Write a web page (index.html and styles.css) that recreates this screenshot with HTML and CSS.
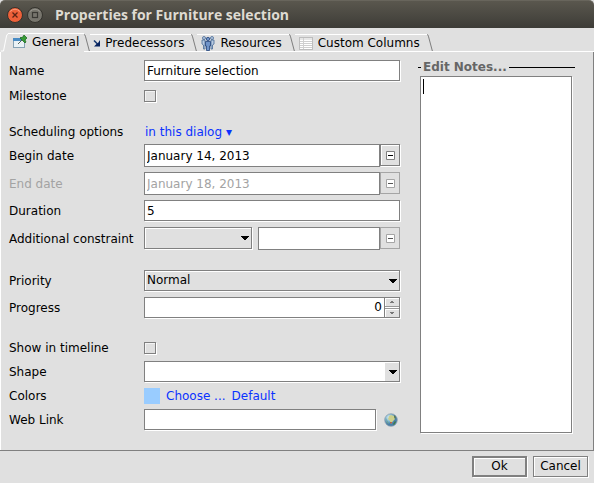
FILE: index.html
```
<!DOCTYPE html>
<html lang="en">
<head>
<meta charset="utf-8">
<title>Properties for Furniture selection</title>
<link rel="stylesheet" href="styles.css">
</head>
<body>
<main class="dialog">
  <header class="titlebar">
    <button class="winbtn close" type="button" aria-label="Close"><svg width="16" height="16" viewBox="0 0 16 16"><circle cx="8" cy="8" r="7.5" fill="#ee6039" stroke="#33322d"/><path d="M3 4.500Q8 0 13 4.500" fill="none" stroke="#f89a79"/><path d="M5.500 5.500l5 5M10.500 5.500l-5 5" stroke="#5c2415" stroke-width="1.300"/></svg></button>
    <button class="winbtn" type="button" aria-label="Maximize"><svg width="16" height="16" viewBox="0 0 16 16"><circle cx="8" cy="8" r="7.500" fill="#77756d" stroke="#33322d"/><path d="M3 4.500Q8 0 13 4.500" fill="none" stroke="#96948c"/><rect x="5.500" y="5.500" width="5" height="5" fill="none" stroke="#3a3934" stroke-width="1.200"/></svg></button>
    <h1 class="title">Properties for Furniture selection</h1>
  </header>

  <nav class="tabs" role="tablist">
    <svg class="edge lead" width="7" height="18" viewBox="0 0 7 18"><path d="M0 17.500H2.500L5.500 2.500Q6 .5 7 .5" fill="none" stroke="#fff"/></svg>
    <button class="tab selected" type="button" role="tab" aria-selected="true">
      <svg width="16" height="16" viewBox="0 0 16 16"><rect x="1.500" y="4.500" width="11" height="9" fill="#edf4f8" stroke="#86a2b4"/><path d="M1 4h9v3H1z" fill="#4a8cc4"/><path d="M2 7h10v6H2z" fill="#e9f1f5"/><path d="M6 10l4-4" stroke="#55645a"/><path d="M8 4l5 5 1-1-1-2 2-2-3-3-2 3-1-1z" fill="#389c35" stroke="#17621b" stroke-width=".7"/></svg>
      <span>General</span>
    </button>
    <svg class="edge" width="6" height="18" viewBox="0 0 6 18"><path d="M0 .5Q1 .5 1.500 3L5.500 18" fill="none" stroke="#777"/></svg>
    <button class="tab" type="button" role="tab">
      <svg width="8" height="16" viewBox="0 0 8 16"><path d="M1 5.500l5 5" stroke="#17376f" stroke-width="1.600"/><path d="M7 5v6.500H1L3.500 9 5 8z" fill="#06225f"/></svg>
      <span>Predecessors</span>
    </button>
    <svg class="edge" width="6" height="18" viewBox="0 0 6 18"><path d="M0 .5Q1 .5 1.500 3L5.500 18" fill="none" stroke="#777"/></svg>
    <button class="tab" type="button" role="tab">
      <svg width="16" height="16" viewBox="0 0 16 16" fill="#b9cbe2" stroke="#486996" stroke-width=".8"><circle cx="4" cy="3" r="1.500"/><path d="M2 5h3v9H3.500V10L2 9z"/><circle cx="12" cy="3" r="1.500"/><path d="M14 5h-3v9h1.500v-4L14 9z"/><g fill="#6f93c8" stroke="#23447b"><circle cx="8" cy="4" r="1.700"/><path d="M5.500 6.500h5V11H9.500v4.500h-3V11h-1z"/></g></svg>
      <span>Resources</span>
    </button>
    <svg class="edge" width="6" height="18" viewBox="0 0 6 18"><path d="M0 .5Q1 .5 1.500 3L5.500 18" fill="none" stroke="#777"/></svg>
    <button class="tab" type="button" role="tab">
      <svg width="16" height="16" viewBox="0 0 16 16"><rect x="1.500" y="2.500" width="13" height="12" fill="#fff" stroke="#bdbdbd"/><path d="M2 4h12M2 6.500h12M2 8.500h12M2 10.500h12M2 12.500h12M5.500 3v11" stroke="#cfcfcf"/></svg>
      <span>Custom Columns</span>
    </button>
    <svg class="edge" width="6" height="18" viewBox="0 0 6 18"><path d="M0 .5Q1 .5 1.500 3L5.500 18" fill="none" stroke="#777"/></svg>
    <span class="baseline"></span>
  </nav>

  <form class="panel">
    <div class="form">
      <div class="group">
        <div class="row"><label for="name">Name</label><input class="field" id="name" type="text" value="Furniture selection"></div>
        <div class="row short"><label for="milestone">Milestone</label><input class="check" id="milestone" type="checkbox"></div>
      </div>
      <div class="group">
        <div class="row line"><span class="label">Scheduling options</span><a class="link inset" href="#">in this dialog ▾</a></div>
        <div class="row tall"><label for="begin">Begin date</label><div class="date"><input class="field" id="begin" type="text" value="January 14, 2013"><button class="pick" type="button" aria-label="Pick begin date"><svg width="9" height="9"><path d="M.5.5h8v8h-8z" fill="#fff" stroke="#808080"/><path d="M2 4.500h5" stroke="#000"/></svg></button></div></div>
        <div class="row tall"><label class="off" for="end">End date</label><div class="date"><input class="field" id="end" type="text" value="January 18, 2013" disabled><button class="pick" type="button" disabled aria-label="Pick end date"><svg width="9" height="9"><path d="M.5.5h8v8h-8z" fill="#fff" stroke="#a5a5a5"/><path d="M2 4.500h5" stroke="#555"/></svg></button></div></div>
        <div class="row"><label for="duration">Duration</label><input class="field" id="duration" type="text" value="5"></div>
        <div class="row tall"><label for="constraint">Additional constraint</label>
          <div class="pair">
            <div class="combo"><select id="constraint"><option></option></select><svg class="arrow" width="8" height="4"><path d="M0 0h8v1H7v1H6v1H5v1H3V3H2V2H1V1H0z"/></svg></div>
            <div class="date"><input class="field" type="text" aria-label="Constraint date"><button class="pick" type="button" disabled aria-label="Pick constraint date"><svg width="9" height="9"><path d="M.5.5h8v8h-8z" fill="#fff" stroke="#a5a5a5"/><path d="M2 4.500h5" stroke="#555"/></svg></button></div>
          </div>
        </div>
      </div>
      <div class="group">
        <div class="row"><label for="priority">Priority</label><div class="combo"><select id="priority"><option>Normal</option></select><svg class="arrow" width="8" height="4"><path d="M0 0h8v1H7v1H6v1H5v1H3V3H2V2H1V1H0z"/></svg></div></div>
        <div class="row"><label for="progress">Progress</label>
          <div class="spinner"><input id="progress" type="text" value="0"><div class="steps"><button type="button" aria-label="Increase"><svg width="4" height="2"><path d="M1 0h2v1h1v1H0V1h1z" fill="#777"/></svg></button><button type="button" aria-label="Decrease"><svg width="4" height="2"><path d="M0 0h4v1H3v1H1V1H0z" fill="#777"/></svg></button></div></div>
        </div>
      </div>
      <div class="group">
        <div class="row short"><label for="timeline">Show in timeline</label><input class="check" id="timeline" type="checkbox"></div>
        <div class="row"><label for="shape">Shape</label><div class="combo light"><select id="shape"><option></option></select><svg class="arrow" width="8" height="4"><path d="M0 0h8v1H7v1H6v1H5v1H3V3H2V2H1V1H0z"/></svg></div></div>
        <div class="row line"><span class="label">Colors</span><div class="colors"><span class="swatch"></span><a class="link" href="#">Choose ...</a><a class="link" href="#">Default</a></div></div>
        <div class="row"><label for="web">Web Link</label>
          <div class="web"><input class="field" id="web" type="text"><button class="globe" type="button" aria-label="Open link"><svg width="14" height="14" viewBox="0 0 14 14"><defs><radialGradient id="sea" cx=".35" cy=".3"><stop offset="0" stop-color="#e4f1f6"/><stop offset=".55" stop-color="#86bcd6"/><stop offset="1" stop-color="#4a7fa8"/></radialGradient></defs><circle cx="7" cy="7" r="6.300" fill="url(#sea)" stroke="#8a9eac" stroke-width=".7"/><path d="M5 3l2-1 3 1 1 3-2 2-2 3-1-3-2-2z" fill="#cdd08c"/><path d="M10 2l2 2-1 2-1-2z" fill="#5b7a52"/><path d="M11 8l1 1-2 3-1-1z" fill="#3f7a48"/><path d="M2 5l1 2 2 4-2-1z" fill="#6aa394"/><path d="M6 9h2l-1 2z" fill="#c7442d"/></svg></button></div>
        </div>
      </div>
    </div>
    <div class="notes">
      <label class="legend" for="notes"><span>Edit Notes...</span></label>
      <div class="notebox"><textarea id="notes"></textarea><span class="caret"></span></div>
    </div>
  </form>

  <footer class="actions">
    <button class="btn default" type="button">Ok</button>
    <button class="btn" type="button">Cancel</button>
  </footer>
</main>
</body>
</html>
```
FILE: styles.css
```
* { box-sizing: border-box; }
body {
  margin: 0;
  background: #e0e0e0;
  color: #000;
  font: 12px/15px "DejaVu Sans", sans-serif;
}
input, select, textarea, button {
  margin: 0;
  border-radius: 0;
  color: inherit;
  font: inherit;
  outline: 0;
}
svg { display: block; flex: none; }
.dialog { display: flex; flex-direction: column; min-height: 100vh; }

.titlebar {
  display: flex;
  align-items: center;
  gap: 4px;
  height: 28px;
  padding: 0 7px;
  border-top: 1px solid #68655c;
  border-radius: 5px 5px 0 0;
  background: linear-gradient(#5a574e, #3d3c37);
}
.winbtn { padding: 0; border: 0; background: none; }
.title {
  margin: 0 0 0 8px;
  color: #dfdbd2;
  font: bold 14px/20px "Open Sans", sans-serif;
}

.tabs {
  display: flex;
  align-items: flex-end;
  height: 24px;
  padding-left: 1px;
  white-space: nowrap;
}
.tab {
  display: flex;
  align-items: center;
  gap: 4px;
  height: 18px;
  padding: 0 7px 0 3px;
  border: 0;
  border-top: 1px solid #fff;
  border-bottom: 1px solid #fff;
  background: none;
}
.tab.selected { height: 19px; padding: 0 5px 2px 4px; border-bottom: 0; }
.edge { border-bottom: 1px solid #fff; }
.edge.lead { height: 19px; border: 0; }
.baseline { flex: 1; height: 1px; background: #fff; }

.panel {
  display: flex;
  gap: 20px;
  padding: 8px 20px 19px 8px;
  border: solid #808080;
  border-width: 0 1px 1px 0;
  box-shadow: inset 1px 0 #fff;
}
.form { display: flex; flex: 1; flex-direction: column; gap: 20px; min-width: 0; padding-left: 1px; }
.group { display: flex; flex-direction: column; gap: 5px; }
.row {
  display: grid;
  grid-template-columns: 135px minmax(0, 1fr);
  align-items: center;
  height: 22px;
}
.row.short { height: 17px; }
.row.tall { height: 23px; }
.row.line { height: 15px; }
.row:has(.colors) { height: 16px; }
.row > label, .label { padding-top: 1px; }
.off { color: #a3a3a3; }
.link { color: #0a32ff; text-decoration: none; }
.inset { padding: 1px 0 0 1px; }

.field {
  width: 100%;
  min-width: 0;
  height: 21px;
  padding: 0 2px;
  border: 1px solid #808080;
  background: #fff;
  box-shadow: 1px 1px #fff;
}
.row > .field, .combo, .spinner, .web, .date, .pair { align-self: start; }
.field:disabled { color: #a3a3a3; }
.check {
  appearance: none;
  width: 12px;
  height: 12px;
  border: 1px solid #808080;
  background: #e0e0e0;
  box-shadow: 1px 1px #fff, inset 1px 1px #f4f4f4;
}
.date { display: flex; flex: 1; min-width: 0; }
.date .field { height: 23px; box-shadow: none; }
.pick {
  display: grid;
  place-items: center;
  flex: none;
  width: 20px;
  height: 22px;
  padding: 0;
  border: 1px solid #808080;
  background: #e0e0e0;
  box-shadow: inset 1px 1px #fff, 1px 1px #fff;
}
.pick:disabled { border-color: #a5a5a5; box-shadow: none; }

.pair { display: flex; gap: 6px; }
.pair .combo { flex: 0 0 108px; }
.combo { display: grid; align-items: center; }
.combo > * { grid-area: 1 / 1; }
.combo select {
  appearance: none;
  width: 100%;
  height: 21px;
  padding: 0 2px;
  border: 1px solid #808080;
  background: #e0e0e0;
  box-shadow: 1px 1px #fff, inset 1px 1px #fff;
}
.pair .combo select { height: 22px; }
.combo.light select { background: linear-gradient(to left, #e0e0e0 14px, #fff 14px); }
.arrow { justify-self: end; margin-right: 3px; pointer-events: none; }

.spinner {
  display: flex;
  height: 21px;
  border: 1px solid #808080;
  background: #fff;
  box-shadow: 1px 1px #fff;
}
.spinner input { flex: 1; min-width: 0; padding: 0 2px; border: 0; background: none; text-align: right; }
.steps { display: flex; flex-direction: column; gap: 1px; width: 15px; background: #fff; border-left: 1px solid #808080; }
.steps button {
  display: grid;
  flex: 1;
  place-items: center;
  padding: 0;
  border: solid #999;
  border-width: 0 0 1px;
  background: #e0e0e0;
  box-shadow: inset 1px 1px #fff;
}
.steps button + button { border-width: 1px 0 0; }

.colors { display: flex; align-items: center; gap: 6px; }
.swatch { width: 16px; height: 16px; background: #99ccff; }
.web { display: flex; align-items: center; gap: 8px; padding-right: 2px; }
.globe { padding: 0; border: 0; background: none; }

.notes { display: flex; flex-direction: column; flex: 0 0 153px; padding-right: 1px; }
.legend {
  display: flex;
  align-items: center;
  gap: 2px;
  height: 15px;
  margin: 0 -3px 1px -2px;
  color: #666;
  font-weight: bold;
}
.legend::before, .legend::after { content: ""; width: 3px; height: 1px; background: #000; }
.legend::after { flex: 1; }
.notebox { position: relative; display: flex; flex: 1; margin-bottom: -2px; }
.notebox textarea {
  width: 100%;
  padding: 2px;
  border: 1px solid #808080;
  background: #fff;
  box-shadow: 1px 1px #fff;
  resize: none;
}
.caret { position: absolute; top: 3px; left: 3px; width: 1px; height: 15px; background: #000; }

.actions { display: flex; justify-content: flex-end; gap: 6px; padding: 5px 6px; }
.btn {
  width: 55px;
  height: 21px;
  padding: 0;
  border: 1px solid #808080;
  background: #e0e0e0;
  box-shadow: 1px 1px #fff, inset 1px 1px #fff;
}
.btn.default { border-width: 2px; }
```
